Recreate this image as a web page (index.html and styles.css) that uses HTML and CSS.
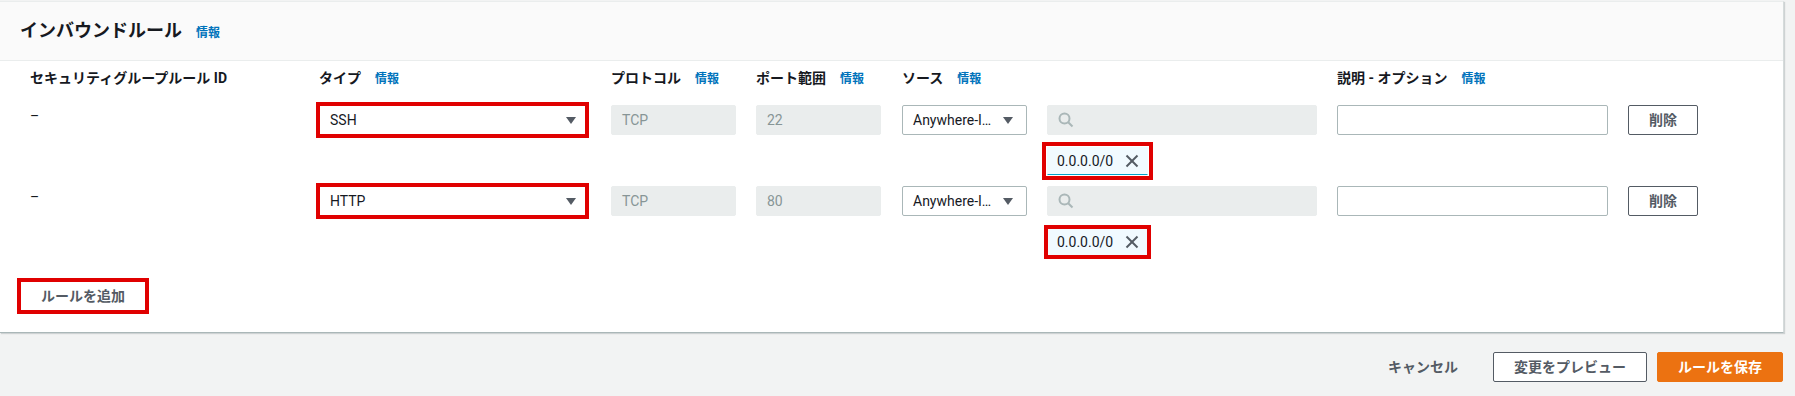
FILE: index.html
```html
<!DOCTYPE html>
<html lang="ja">
<head>
  <meta charset="UTF-8" />
  <meta name="viewport" content="width=device-width,initial-scale=1.0" />
  <title>インバウンドルール</title>
  <link rel="stylesheet" href="styles.css">
</head>
<body>
  <div class="page">
    <div class="card">
      <div class="card-header">
        <h2>インバウンドルール</h2>
        <a class="info" href="#">情報</a>
      </div>
      <div class="card-body">
        <div class="rules">
          <div class="rule-head">
            <div>セキュリティグループルール ID</div>
            <div>タイプ<a class="info" href="#">情報</a></div>
            <div>プロトコル<a class="info" href="#">情報</a></div>
            <div>ポート範囲<a class="info" href="#">情報</a></div>
            <div>ソース<a class="info" href="#">情報</a></div>
            <div></div>
            <div>説明 - オプション<a class="info" href="#">情報</a></div>
            <div></div>
          </div>

          <div class="rule-row">
            <div class="dash">–</div>
            <div><div class="field select w-type mark">SSH<svg class="caret" width="10" height="7" viewBox="0 0 10 7"><polygon points="0,0 10,0 5,7"/></svg></div></div>
            <div><div class="field disabled w-small">TCP</div></div>
            <div><div class="field disabled w-small">22</div></div>
            <div><div class="field select w-small src">Anywhere-I…<svg class="caret" width="10" height="7" viewBox="0 0 10 7"><polygon points="0,0 10,0 5,7"/></svg></div></div>
            <div class="source">
              <div class="field disabled w-wide"><svg width="16" height="16" viewBox="0 0 16 16" class="search"><circle cx="6.5" cy="6.5" r="5"/><line x1="10.2" y1="10.2" x2="14.5" y2="14.5"/></svg></div>
              <div class="token active mark-outer">0.0.0.0/0<svg width="14" height="14" viewBox="0 0 14 14" class="close"><line x1="1.5" y1="1.5" x2="12.5" y2="12.5"/><line x1="12.5" y1="1.5" x2="1.5" y2="12.5"/></svg></div>
            </div>
            <div><div class="field w-wide desc"></div></div>
            <div><button class="btn">削除</button></div>
          </div>

          <div class="rule-row">
            <div class="dash">–</div>
            <div><div class="field select w-type mark">HTTP<svg class="caret" width="10" height="7" viewBox="0 0 10 7"><polygon points="0,0 10,0 5,7"/></svg></div></div>
            <div><div class="field disabled w-small">TCP</div></div>
            <div><div class="field disabled w-small">80</div></div>
            <div><div class="field select w-small src">Anywhere-I…<svg class="caret" width="10" height="7" viewBox="0 0 10 7"><polygon points="0,0 10,0 5,7"/></svg></div></div>
            <div class="source">
              <div class="field disabled w-wide"><svg width="16" height="16" viewBox="0 0 16 16" class="search"><circle cx="6.5" cy="6.5" r="5"/><line x1="10.2" y1="10.2" x2="14.5" y2="14.5"/></svg></div>
              <div class="token mark-inner">0.0.0.0/0<svg width="14" height="14" viewBox="0 0 14 14" class="close"><line x1="1.5" y1="1.5" x2="12.5" y2="12.5"/><line x1="12.5" y1="1.5" x2="1.5" y2="12.5"/></svg></div>
            </div>
            <div><div class="field w-wide desc"></div></div>
            <div><button class="btn">削除</button></div>
          </div>
        </div>
        <button class="btn add mark-inner">ルールを追加</button>
      </div>
    </div>

    <div class="actions">
      <button class="btn btn-link">キャンセル</button>
      <button class="btn">変更をプレビュー</button>
      <button class="btn btn-primary">ルールを保存</button>
    </div>
  </div>
</body>
</html>
```

FILE: styles.css
```css
body {
  margin: 0;
  background: #f2f3f3;
  font-family: Roboto, "Noto Sans CJK JP", sans-serif;
  font-size: 14px;
  line-height: 20px;
  color: #16191f;
}
.page {
  padding: 1px 11px 0 0;
}
.card {
  background: #fff;
  border-top: 1px solid #eaeded;
  border-right: 1px solid #d5dbdb;
  border-bottom: 1px solid #aab7b8;
  box-shadow: 1px 1px 1px rgba(0, 28, 36, 0.15);
}
.card-header {
  background: #fafafa;
  border-bottom: 1px solid #eaeded;
  padding: 18px 20px 17px;
  display: flex;
  align-items: baseline;
}
.card-header h2 {
  margin: 0;
  font-size: 18px;
  line-height: 22px;
  font-weight: 700;
}
.info {
  color: #0073bb;
  font-size: 12px;
  font-weight: 700;
  margin-left: 14px;
  text-decoration: none;
}
.card-body {
  padding: 6px 20px 21px;
}
.rules {
  margin-left: 10px;
  display: flex;
  flex-direction: column;
  gap: 11px;
}
.rule-head,
.rule-row {
  display: grid;
  grid-template-columns: 289px 292px 145px 146px 145px 290px 291px 70px;
}
.rule-head {
  margin-bottom: 4px;
  line-height: 22px;
  font-weight: 700;
}
.dash {
  line-height: 22px;
}
.field {
  height: 30px;
  box-sizing: border-box;
  border: 1px solid #aab7b8;
  border-radius: 2px;
  padding: 4px 10px;
  display: flex;
  align-items: center;
  background: #fff;
}
.field.disabled {
  background: #eaeded;
  border-color: #eaeded;
  color: #879596;
}
.select {
  justify-content: space-between;
  padding-right: 9px;
  white-space: nowrap;
}
.select.src {
  padding-right: 13px;
}
.caret {
  fill: #545b64;
  flex: none;
}
.w-type { width: 267px; }
.w-small { width: 125px; }
.w-wide { width: 270px; }
.desc { width: 271px; }
.source {
  display: flex;
  flex-direction: column;
  align-items: flex-start;
  gap: 12px;
}
.search {
  fill: none;
  stroke: #aab7b8;
  stroke-width: 2;
}
.token {
  height: 28px;
  box-sizing: border-box;
  display: inline-flex;
  align-items: center;
  gap: 12px;
  padding: 0 8px 0 9px;
  background: #f1faff;
  border: 1px solid #f1faff;
  border-radius: 2px;
}
.token.active {
  border-bottom-color: #00a1c9;
}
.close {
  stroke: #545b64;
  stroke-width: 2;
}
.btn {
  height: 30px;
  box-sizing: border-box;
  padding: 0 20px;
  border: 1px solid #545b64;
  border-radius: 2px;
  background: #fff;
  color: #545b64;
  font-family: inherit;
  font-size: 14px;
  line-height: 20px;
  font-weight: 700;
  white-space: nowrap;
}
.btn.add {
  margin-top: 25px;
}
.btn-link {
  border-color: transparent;
  background: none;
  margin-right: 4px;
}
.btn-primary {
  background: #ec7211;
  border-color: #ec7211;
  color: #fff;
}
.actions {
  display: flex;
  justify-content: flex-end;
  align-items: center;
  gap: 10px;
  padding: 19px 1px 0 0;
}
/* red annotation boxes */
.mark,
.mark-inner,
.mark-outer {
  border-radius: 0;
  outline: 4px solid #e00000;
}
.mark {
  outline-offset: -1px;
}
.mark-inner {
  outline-offset: -1px;
}
.mark-outer {
  outline-offset: 1px;
}
```
